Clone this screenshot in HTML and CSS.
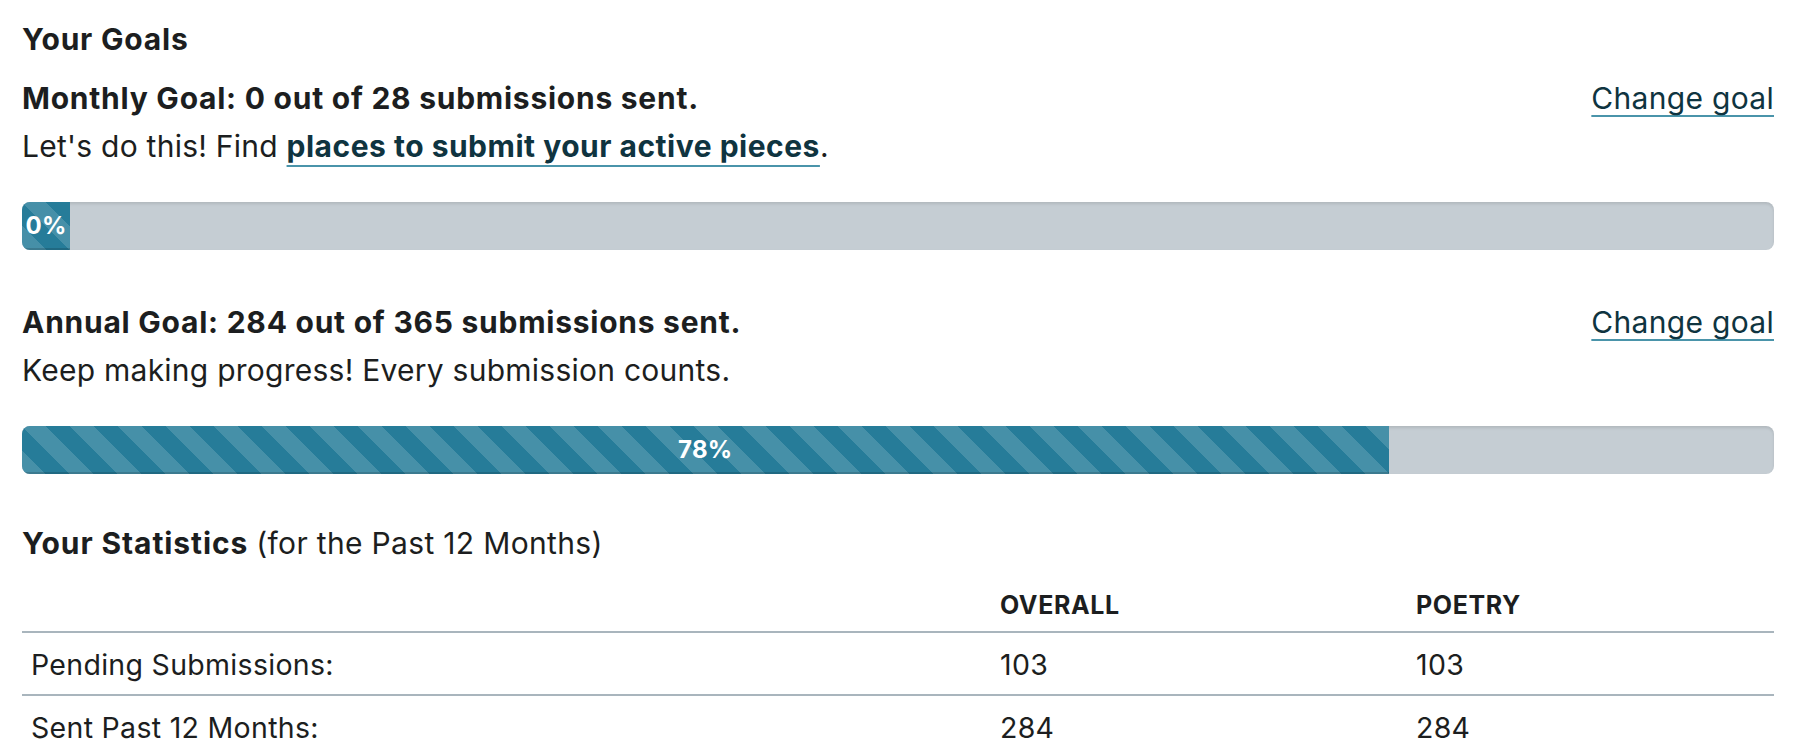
FILE: index.html
```html
<!DOCTYPE html>
<html lang="en">
<head>
<meta charset="utf-8">
<title>Your Goals</title>
<link rel="stylesheet" href="styles.css">
</head>
<body>
<div class="page">
  <h2 class="title">Your Goals</h2>

  <section class="goal">
    <div class="goal-head">
      <h3 class="goal-title">Monthly Goal: 0 out of 28 submissions sent.</h3>
      <a class="change" href="#">Change goal</a>
    </div>
    <p class="goal-text">Let's do this! Find <a class="strong-link" href="#">places to submit your active pieces</a>.</p>
    <div class="progress"><div class="bar bar-min" style="width:0%">0%</div></div>
  </section>

  <section class="goal goal-last">
    <div class="goal-head">
      <h3 class="goal-title">Annual Goal: 284 out of 365 submissions sent.</h3>
      <a class="change" href="#">Change goal</a>
    </div>
    <p class="goal-text">Keep making progress! Every submission counts.</p>
    <div class="progress"><div class="bar" style="width:78%">78%</div></div>
  </section>

  <h2 class="stats-title">Your Statistics <span class="sub">(for the Past 12 Months)</span></h2>
  <table class="stats">
    <colgroup>
      <col class="c1"><col class="c2"><col class="c3">
    </colgroup>
    <thead>
      <tr><th></th><th>Overall</th><th>Poetry</th></tr>
    </thead>
    <tbody>
      <tr><td>Pending Submissions:</td><td>103</td><td>103</td></tr>
      <tr><td>Sent Past 12 Months:</td><td>284</td><td>284</td></tr>
    </tbody>
  </table>
</div>
</body>
</html>
```
FILE: styles.css
```css
* { box-sizing: border-box; }
html, body { margin: 0; padding: 0; background: #ffffff; }
body {
  font-family: Inter, "Noto Sans", "Liberation Sans", sans-serif;
  color: #1c1e20;
  font-size: 30px;
  line-height: 46px;
  letter-spacing: 0.25px;
}
.page { padding: 16px 22px 0 22px; }

.title {
  margin: 0 0 13px 0;
  font-size: 30px;
  line-height: 46px;
  font-weight: 700;
  letter-spacing: 0.8px;
}

.goal { margin-bottom: 49px; }
.goal-last { margin-bottom: 46px; }
.goal-head {
  display: flex;
  justify-content: space-between;
  align-items: baseline;
}
.goal-title {
  margin: 0;
  font-size: 30px;
  line-height: 46px;
  font-weight: 700;
  letter-spacing: 0.75px;
}
.change {
  color: #0f3440;
  letter-spacing: 0.3px;
  text-decoration: underline;
  text-decoration-color: #4a94aa;
  text-decoration-thickness: 2px;
  text-underline-offset: 6px;
}
.goal-text { margin: 2px 0 33px 0; }
.strong-link {
  color: #0f3440;
  font-weight: 700;
  letter-spacing: 0.5px;
  text-decoration: underline;
  text-decoration-color: #4a94aa;
  text-decoration-thickness: 2px;
  text-underline-offset: 8px;
}

.progress {
  height: 48px;
  background: #c5cdd3;
  border-radius: 8px;
  overflow: hidden;
  box-shadow: inset 0 2px 3px rgba(0,0,0,0.1);
  display: flex;
}
.bar {
  height: 100%;
  background-color: #267c99;
  background-image: linear-gradient(45deg,
    rgba(255,255,255,.15) 25%, transparent 25%, transparent 50%,
    rgba(255,255,255,.15) 50%, rgba(255,255,255,.15) 75%, transparent 75%, transparent);
  background-size: 48px 48px;
  color: #ffffff;
  font-size: 24px;
  font-weight: 700;
  line-height: 48px;
  letter-spacing: 0.3px;
  text-align: center;
  box-shadow: inset 0 -2px 0 rgba(0,0,0,.15);
}
.bar-min { min-width: 48px; }

.stats-title {
  margin: 0 0 19px 0;
  font-size: 30px;
  line-height: 46px;
  font-weight: 700;
  letter-spacing: 0.9px;
}
.stats-title .sub { font-weight: 400; letter-spacing: 0.33px; }

.stats {
  width: 100%;
  border-collapse: collapse;
}
.c1 { width: 969px; }
.c2 { width: 416px; }
.stats th {
  text-align: left;
  font-size: 25px;
  line-height: 40px;
  font-weight: 700;
  letter-spacing: 0.6px;
  text-transform: uppercase;
  padding: 0 9px 6px 9px;
  border-bottom: 2px solid #a9b5bd;
}
.stats td {
  font-size: 28.5px;
  line-height: 40px;
  letter-spacing: 0.3px;
  padding: 12px 9px 9px 9px;
  border-top: 2px solid #a9b5bd;
}
```
